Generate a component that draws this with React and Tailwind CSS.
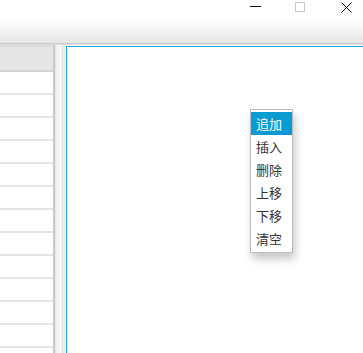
const rows = Array.from({ length: 12 });

const menuItems = ['追加', '插入', '删除', '上移', '下移', '清空'];

const App = () => {
  return (
    <div
      className="relative w-[363px] h-[353px] overflow-hidden bg-white"
      style={{ fontFamily: '"Noto Sans CJK SC", "Noto Sans", sans-serif' }}
    >
      {/* title bar */}
      <div className="h-[19px] bg-white relative">
        <svg className="absolute left-[250px] top-[6px]" width="11" height="2" viewBox="0 0 11 2">
          <rect x="0" y="0" width="11" height="1" fill="#111" />
        </svg>
        <svg className="absolute left-[295px] top-[2px]" width="10" height="10" viewBox="0 0 10 10">
          <rect x="0.5" y="0.5" width="9" height="9" fill="none" stroke="#c8c8c8" />
        </svg>
        <svg className="absolute left-[341px] top-[2px]" width="11" height="11" viewBox="0 0 11 11">
          <path d="M0.5 0.5 L10.5 10.5 M10.5 0.5 L0.5 10.5" stroke="#111" strokeWidth="1" />
        </svg>
      </div>

      {/* toolbar */}
      <div className="h-[24px] bg-gradient-to-b from-white to-[#e6e6e6]" />
      <div className="h-[1px] bg-[#c9c9c9]" />
      <div className="h-[1px] bg-[#dcdcdc]" />

      {/* content */}
      <div className="flex h-[320px]">
        <div className="w-[53px] flex flex-col">
          <div className="h-[27px] shrink-0 bg-[#e6e6e6] border-t-2 border-[#dadada] border-b-2 border-b-[#d4d4d4]" />
          {rows.map((_, i) => (
            <div key={i} className="h-[23px] shrink-0 bg-white border-b-2 border-[#e4e4e4]" />
          ))}
        </div>
        <div className="w-[2px] bg-[#c9c9c9]" />
        <div className="w-[1px] bg-[#e6e6e6]" />
        <div className="w-[4px] bg-[#f1f1f1]" />
        <div className="w-[1px] bg-white" />
        <div className="w-[4px] bg-[#e9e9e9]" />
        <div className="w-[1px] bg-[#f4f4f4]" />
        <div className="flex-1 flex flex-col">
          <div className="h-[1px] bg-white" />
          <div className="flex-1 border-l border-t border-[#1aa1dc] bg-white" />
        </div>
      </div>

      {/* context menu */}
      <div className="absolute left-[250px] top-[109px] w-[43px] bg-white border border-[#bdbdbd] py-[2px] shadow-[2px_6px_8px_rgba(0,0,0,0.22)]">
        {menuItems.map((label, i) => (
          <div
            key={label}
            className={`h-[23px] flex items-center pl-[5px] text-[13px] leading-none ${
              i === 0 ? 'bg-[#0b9bd3] text-white' : 'text-[#333]'
            }`}
          >
            {label}
          </div>
        ))}
      </div>
    </div>
  );
};

export default App;
